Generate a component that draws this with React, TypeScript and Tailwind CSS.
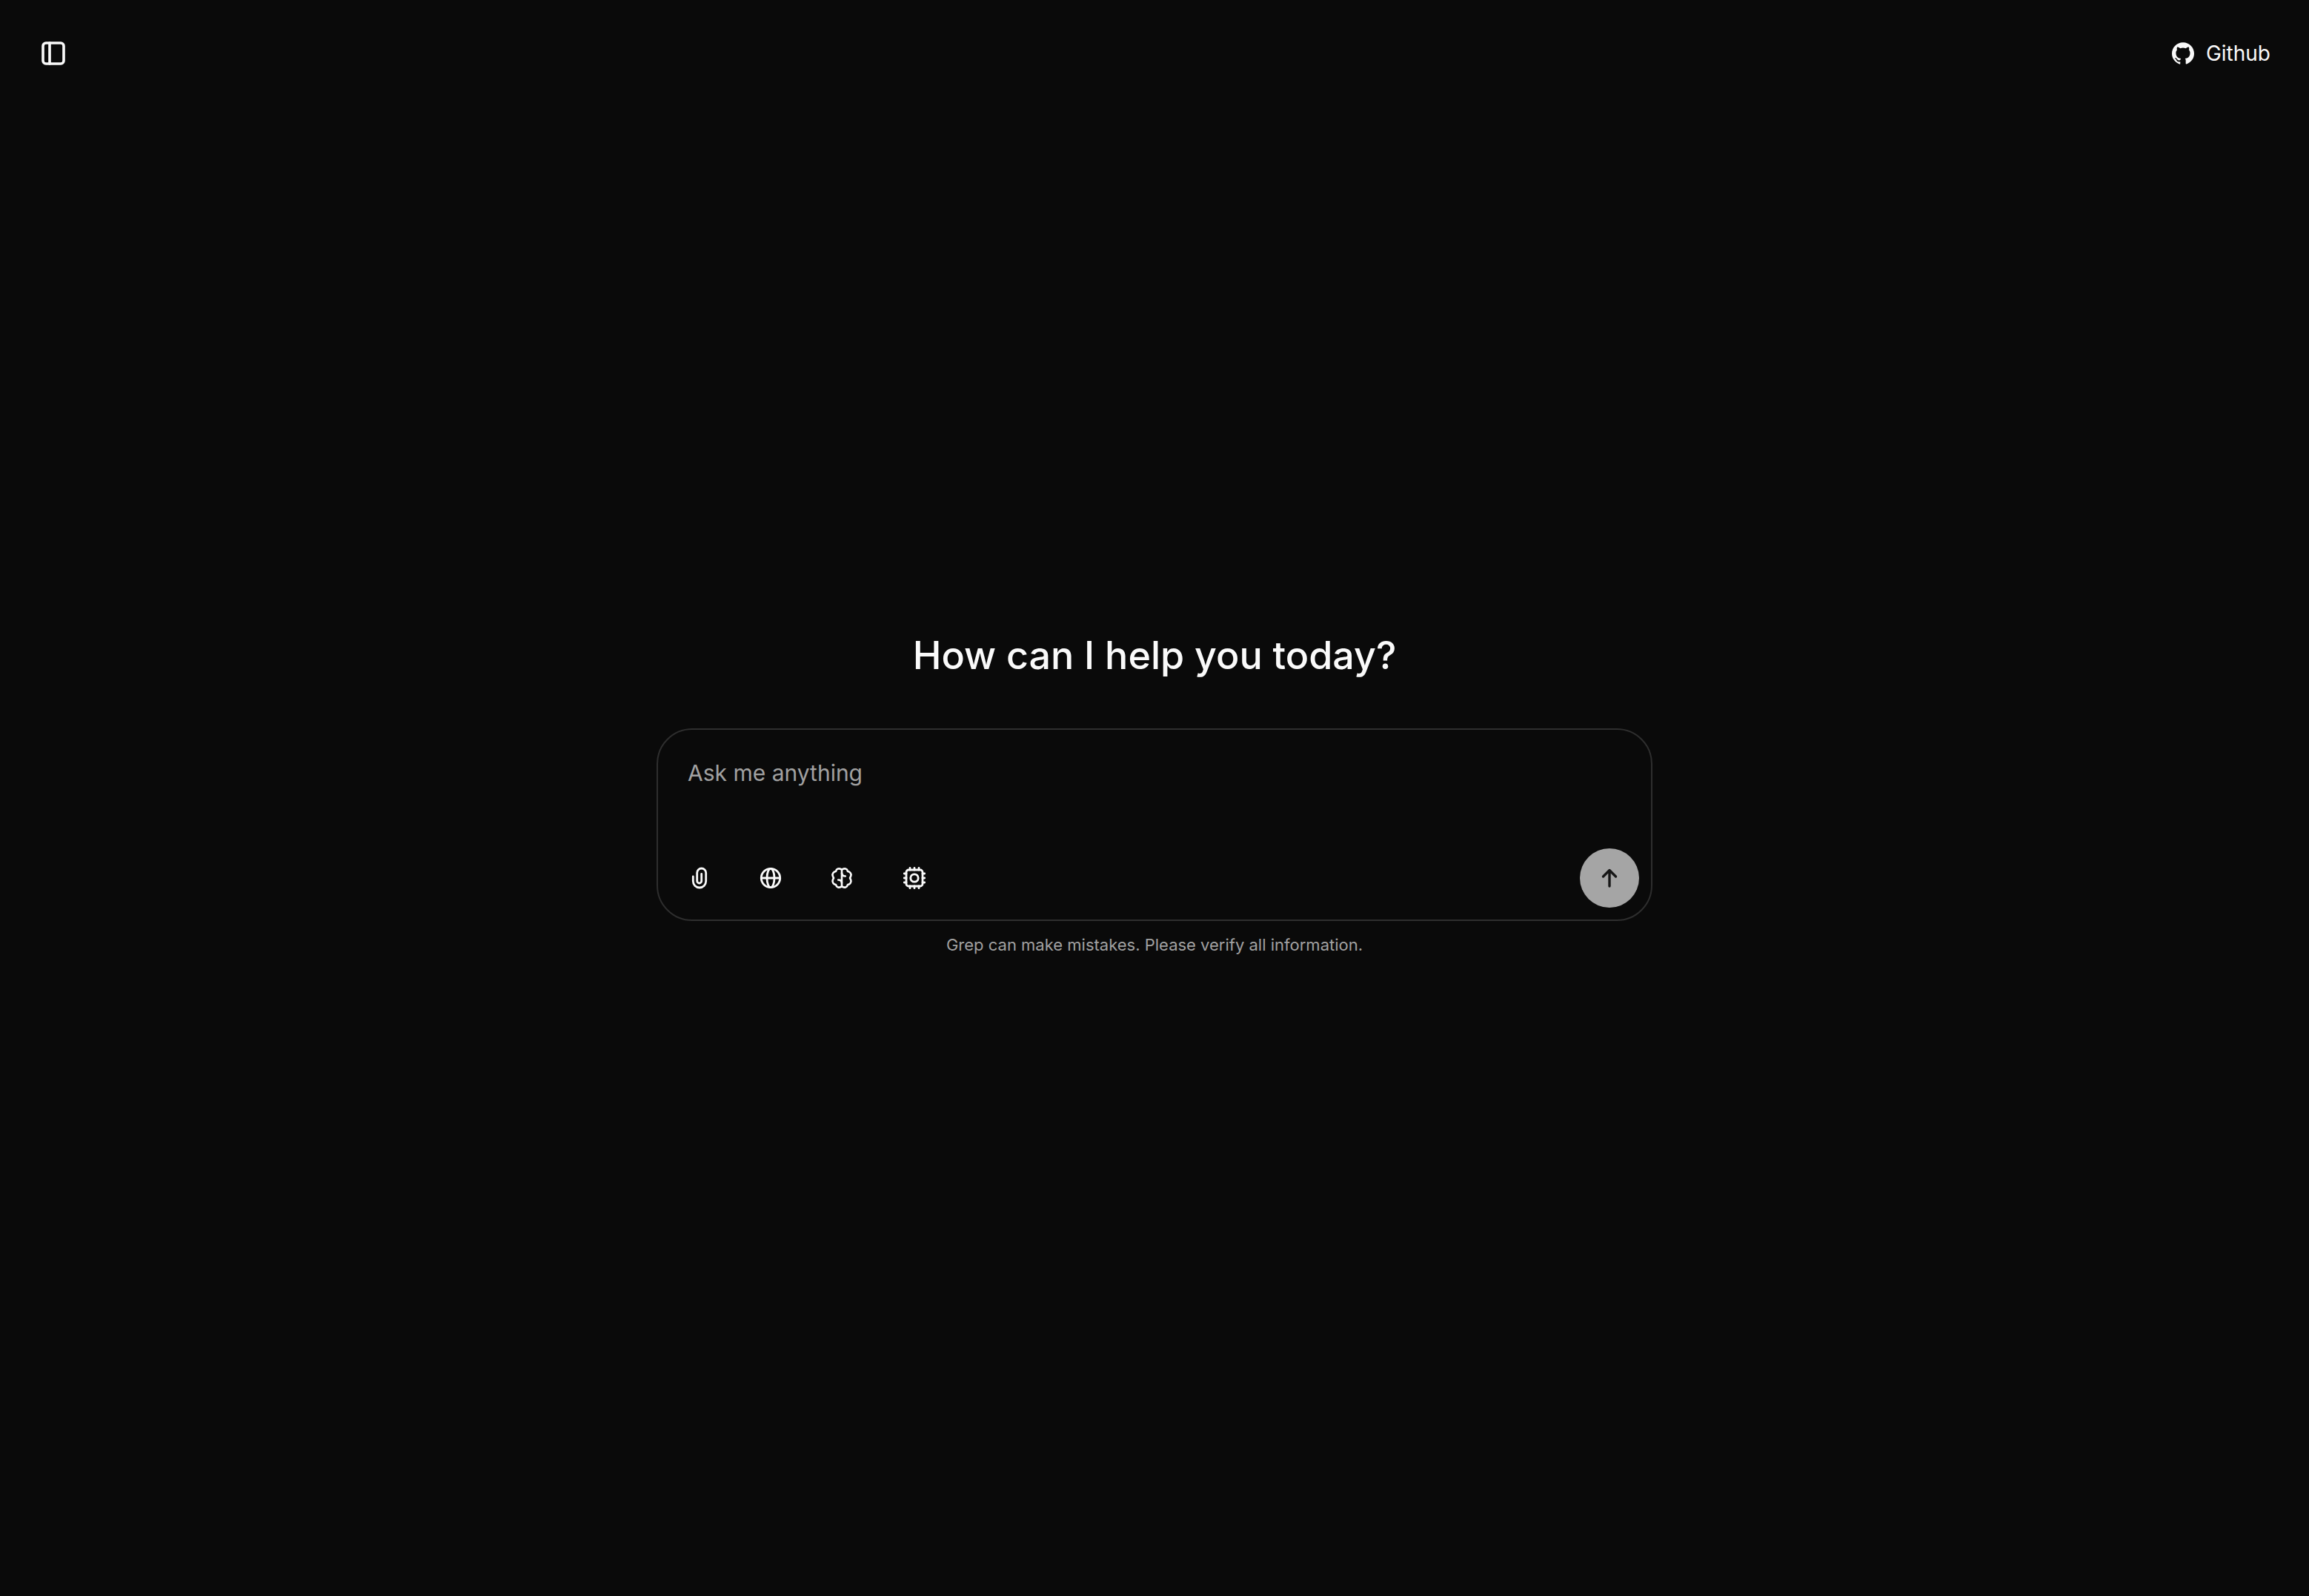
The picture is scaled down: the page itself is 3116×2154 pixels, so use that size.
import React from "react";
import { SiGithub } from "react-icons/si";

const stroke = {
  fill: "none",
  stroke: "currentColor",
  strokeWidth: 2.8,
  strokeLinecap: "round" as const,
  strokeLinejoin: "round" as const,
  viewBox: "0 0 40 40",
  className: "size-10",
  "aria-hidden": true,
};

function SidebarIcon() {
  return (
    <svg {...stroke} strokeWidth={3.6}>
      <rect x="6" y="6" width="28" height="28" rx="4" />
      <path d="M15 6v28" />
    </svg>
  );
}

function PaperclipIcon() {
  return (
    <svg {...stroke}>
      <path d="M11.3 18v6.3a8.7 8.7 0 0 0 17.4 0V13a6 6 0 0 0-12 0v11a3 3 0 0 0 6 0V14.5" />
    </svg>
  );
}

function GlobeIcon() {
  return (
    <svg {...stroke}>
      <circle cx="20" cy="20" r="12.7" />
      <ellipse cx="20" cy="20" rx="5" ry="12.7" />
      <path d="M7.3 20h25.4" />
    </svg>
  );
}

function BrainIcon() {
  return (
    <svg {...stroke} strokeWidth={2.6}>
      <path d="M20 8.8v22.4" />
      <path d="M20 8.800C18.600 7.500 16.600 7.100 14.800 7.600 13.200 8.100 12.300 9.300 12 10.900 9 11.400 7 14.200 7.600 16.600 7.900 18 8.400 19 9 20 8.400 21 7.900 22 7.600 23.400 7 25.800 9 28.600 12 29.100 12.300 30.700 13.200 31.900 14.800 32.400 16.600 32.900 18.600 32.500 20 31.200" />
      <path d="M20 8.800C21.400 7.500 23.400 7.100 25.200 7.600 26.800 8.100 27.700 9.300 28 10.900 31 11.400 33 14.200 32.400 16.600 32.100 18 31.600 19 31 20 31.600 21 32.100 22 32.400 23.400 33 25.800 31 28.600 28 29.100 27.700 30.700 26.800 31.900 25.200 32.400 23.400 32.900 21.400 32.500 20 31.200" />
      <path d="M20 13.500c.3 2.600 1.800 4 4.800 4M20 26.500c-.3-2.600-1.800-4-4.800-4" />
    </svg>
  );
}

function ChipIcon() {
  return (
    <svg {...stroke}>
      <rect x="9" y="9" width="22" height="22" rx="3" />
      <circle cx="20" cy="20" r="5.2" />
      <path d="M14 9V6.300M20 9V6.300M26 9V6.300M14 33.700V31M20 33.700V31M26 33.700V31M9 14H6.300M9 20H6.300M9 26H6.300M33.700 14H31M33.700 20H31M33.700 26H31" />
    </svg>
  );
}

function ArrowUpIcon() {
  return (
    <svg {...stroke} strokeWidth={3.4}>
      <path d="M20 31V9.500M11.500 18 20 9.500l8.500 8.500" />
    </svg>
  );
}

const tools = [
  { label: "Attach file", icon: <PaperclipIcon />, width: "w-20" },
  { label: "Search the web", icon: <GlobeIcon />, width: "w-20" },
  { label: "Reasoning", icon: <BrainIcon />, width: "w-20" },
  { label: "Choose model", icon: <ChipIcon />, width: "w-[84px]" },
];

export default function App() {
  return (
    <div className="flex min-h-screen flex-col bg-[#0a0a0a] font-['Inter',sans-serif] text-neutral-50">
      <header className="flex h-36 items-center justify-between px-8">
        <button type="button" aria-label="Toggle sidebar" className="flex size-20 items-center justify-center">
          <SidebarIcon />
        </button>
        <a href="#github" className="flex items-center gap-4 px-5 text-[28px] leading-10">
          <SiGithub className="size-[30px]" aria-hidden />
          Github
        </a>
      </header>

      <main className="flex flex-1 flex-col items-center justify-center px-8 pb-40">
        <h1 className="text-[52px] leading-[76px] font-medium">How can I help you today?</h1>

        <form
          className="mt-15 flex w-full max-w-[1344px] flex-col rounded-[48px] border-2 border-[#2e2e2e] p-4"
          onSubmit={(event) => event.preventDefault()}
        >
          <textarea
            aria-label="Message"
            placeholder="Ask me anything"
            className="h-36 w-full resize-none bg-transparent px-6 pt-4 text-[30px] leading-[52px] outline-none placeholder:text-[#a1a1a1]"
          />
          <div className="flex items-center justify-between">
            <div className="flex gap-4">
              {tools.map((tool) => (
                <button
                  key={tool.label}
                  type="button"
                  aria-label={tool.label}
                  className={`flex h-20 items-center justify-center rounded-full ${tool.width}`}
                >
                  {tool.icon}
                </button>
              ))}
            </div>
            <button
              type="submit"
              aria-label="Send message"
              className="flex size-20 items-center justify-center rounded-full bg-[#a5a5a5] text-[#171717]"
            >
              <ArrowUpIcon />
            </button>
          </div>
        </form>

        <p className="mt-4 text-[22px] leading-8 text-[#a1a1a1]">
          Grep can make mistakes. Please verify all information.
        </p>
      </main>
    </div>
  );
}
